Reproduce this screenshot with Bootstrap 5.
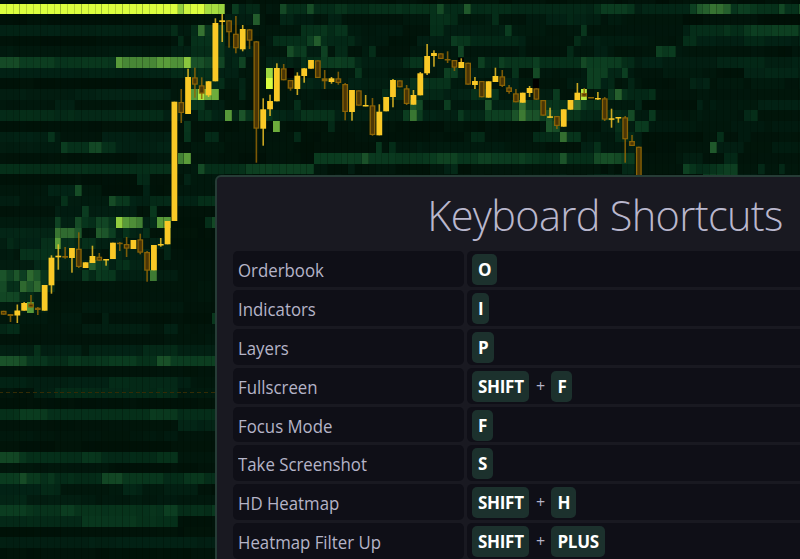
<!DOCTYPE html>
<html lang="en" data-bs-theme="dark">
<head>
<meta charset="utf-8">
<meta name="viewport" content="width=device-width, initial-scale=1">
<title>Keyboard Shortcuts</title>
<link href="https://cdn.jsdelivr.net/npm/bootstrap@5.3.0/dist/css/bootstrap.min.css" rel="stylesheet">
<style>
body{background:#001108;font-family:"Open Sans","Noto Sans",sans-serif;color:#b5b4c8}
.stage{width:800px;height:559px}
.shortcuts{width:780px;height:600px;margin:175px 0 0 215px;background:#191921;border:2px solid #263c36;border-radius:6px;padding:0 16px}
.shortcuts h1{font-weight:300;font-size:43px;line-height:50px;letter-spacing:-.7px;margin:13px 0 11px;color:#b9b7cd;transform:scaleX(.965)}
.keys{row-gap:3px}
.entry{display:grid;grid-template-columns:231px 1fr;grid-template-rows:35.9px;column-gap:3px;height:35.9px}
.entry>div{background:#0f0f17;border-radius:5px;padding:1px 5px 0;font-size:17.5px;line-height:37px;white-space:nowrap;overflow:hidden}
.lbl{display:inline-block;transform:scaleX(.96);transform-origin:left}
.entry kbd{background:#1c312d;color:#fff;font:700 17px/31px "Open Sans","Noto Sans",sans-serif;letter-spacing:-.3px;height:31px;padding:0 5.8px 0 6px;border-radius:5px}
.plus{width:22px;font-size:16px;text-align:center}
</style>
</head>
<body class="m-0 overflow-hidden">
<main class="stage position-relative overflow-hidden d-flex">
  <canvas id="chart" class="position-absolute top-0 start-0" width="800" height="559"></canvas>
  <section class="shortcuts position-relative flex-shrink-0">
    <h1 class="text-center">Keyboard Shortcuts</h1>
    <div class="keys d-flex flex-column">
      <div class="entry"><div><span class="lbl">Orderbook</span></div><div class="d-flex align-items-center"><kbd>O</kbd></div></div>
      <div class="entry"><div><span class="lbl">Indicators</span></div><div class="d-flex align-items-center"><kbd>I</kbd></div></div>
      <div class="entry"><div><span class="lbl">Layers</span></div><div class="d-flex align-items-center"><kbd>P</kbd></div></div>
      <div class="entry"><div><span class="lbl">Fullscreen</span></div><div class="d-flex align-items-center"><kbd>SHIFT</kbd><span class="plus">+</span><kbd>F</kbd></div></div>
      <div class="entry"><div><span class="lbl">Focus Mode</span></div><div class="d-flex align-items-center"><kbd>F</kbd></div></div>
      <div class="entry"><div><span class="lbl">Take Screenshot</span></div><div class="d-flex align-items-center"><kbd>S</kbd></div></div>
      <div class="entry"><div><span class="lbl">HD Heatmap</span></div><div class="d-flex align-items-center"><kbd>SHIFT</kbd><span class="plus">+</span><kbd>H</kbd></div></div>
      <div class="entry"><div><span class="lbl">Heatmap Filter Up</span></div><div class="d-flex align-items-center"><kbd>SHIFT</kbd><span class="plus">+</span><kbd>PLUS</kbd></div></div>
    </div>
  </section>
</main>
<script src="https://cdn.jsdelivr.net/npm/bootstrap@5.3.0/dist/js/bootstrap.bundle.min.js"></script>
<script>
const ctx = document.getElementById('chart').getContext('2d');
const CW = 6.83, RH = 10.67, TOP = 3.7;
const palette = [[0,15,6],[1,23,12],[2,33,20],[5,46,25],[11,60,32],[28,84,42],[56,116,50],[88,154,58],[157,216,64],[220,255,63]];

// Each row lists "column:level" breakpoints; a level holds until the next breakpoint.
const rows = [
"0:.3",
"0:9 26:7.8 27:8.7 28:9 30:8.1 32:7.9 33:1 34:4 35:2.5 36:3 38:1 41:4.5 42:3 45:4.7 46:3 58:3.4 64:4.7 65:3 68:5.2 69:3 75:2.6 88:3.6 93:2 101:4 102:5 103:5.3 104:5.9 106:5.4 107:3 108:4 110:3.4 114:4.6 115:3.6 117:5",
"0:.3 33:1.5 37:5.2 38:.6 41:2.6 43:1 48:2 50:1 63:3 67:1.5 72:3.3 73:1 80:2 88:1 100:.3",
"0:2 25:3 26:1.5 28:3 29:6 30:3.6 33:.8 44:3 51:1 63:3.4 65:1.5 74:3.6 75:1 85:3.5 86:1 100:2 101:3 109:3.8 117:3",
"0:.3 25:.8 26:2.7 27:1 28:3 31:3.5 33:1 40:2.6 45:4 46:5.2 47:2.8 52:1.4 57:.6 61:2 66:4 67:3 69:2 77:1 84:3 85:1.5 88:1 100:3 102:2",
"0:1.2 25:2 28:3 31:3.5 33:2 37:1 42:4.8 43:3.9 45:2 47:4.3 48:1.4 49:3 51:1 54:3 55:1 67:4.2 68:1 83:3 84:1.5 89:.8 96:4 97:3.5 99:.8 112:.5",
"0:4.6 3:4 8:3.5 10:3.6 17:7 18:6.5 23:7 25:6.7 27:7.7 28:4.8 30:4.3 33:2 35:4.3 36:1 39:2 44:3 47:4 52:2 59:3 62:1 70:4 71:2 73:4 74:3 78:4 79:2.8 85:4.5 86:4 91:2.7 93:2",
"0:2 25:2.5 28:3.2 31:2 35:1 39:8 40:1 52:3.2 53:1 65:4 67:1.5 75:3.6 76:.8 78:4.5 79:1 86:4 89:2 91:3.6 92:1 105:.5 109:2",
"0:.4 25:1 28:3 31:3 33:1 35:2 36:1 39:9 40:1 43:2 50:1.5 60:3 66:1 74:2.5 76:1 86:4 88:2.5 90:.8 92:2 93:.7 101:2 104:1",
"0:1.6 11:2 25:1 28:7 29:8.3 30:7.3 32:1 35:2.6 36:1 56:2.6 62:2 69:3 72:3.6 73:1.5 79:2 81:4 82:1 85:8.5 86:1 89:3.5 90:5.3 91:3.4 92:2.6 96:1",
"0:1 8:2 11:1 25:1.5 28:3.6 30:1.6 33:.6 43:3 44:1 60:5.2 61:4.6 62:1 65:4 66:1 71:5 72:2 75:3.7 76:5.8 77:4 79:3.5 82:3 83:4 84:5.8 85:4 86:3 88:1 93:2 94:.5 102:2 103:1 111:2",
"0:2.7 24:1.8 27:1 29:3 31:2 33:7 34:2.4 35:4.9 36:3 40:2 44:3 49:1.5 59:4 60:6 61:4 62:2 67:3.7 68:2 71:4 75:4.8 76:6 77:4.8 79:4 80:4.8 81:4 83:3.5 85:2.6 91:2 92:4.5 93:1 95:3.4 96:1 109:2.6 111:1",
"0:.4 27:3.6 28:.6 40:7.4 41:.7 48:2.5 49:.6 80:4.9 81:4.6 82:1 88:2 90:3.5 91:2 93:3.5 95:1",
"0:2 7:3.5 8:1.6 9:.6 15:1.8 25:.5 27:3.5 28:.7 30:2.6 32:.6 43:3 44:.7 69:2.6 71:1 78:3 82:5.8 83:3.4 85:1 90:2 94:.6 105:2.8 106:1",
"0:1.4 9:4 10:3.2 13:4.5 15:3 17:2 25:.5 28:1 33:.5 55:3.5 56:.7 57:2.7 58:1 80:.6 85:2 87:3.2 88:1.5 92:2 94:.5 104:5.2 105:2 109:1",
"0:.5 20:1 26:6.3 27:7 28:1 32:.6 46:4 53:4.9 54:3.9 78:3.2 82:5.1 83:3.4 87:4.6 91:4 93:1 100:2 103:1 106:2.8 108:.5",
"0:3 25:1.2 29:4.6 30:3 36:4 46:.7 51:2 52:.7 65:2.4 67:.6 91:2.8 93:1 100:3.8 101:3 104:3.4 106:4 108:.8 111:2.6 112:1 114:2.6 115:1",
"0:.4 20:2.6 22:.6 27:2 28:1 33:.5 76:1 87:2 93:.5 103:4 108:1",
"0:1 7:2 11:4.6 12:1 15:.4 21:2 22:.5 25:.3 26:1",
"0:1.6 3:1 9:3 10:1.3 16:4.6 17:3.5 19:2 22:2.7 25:.3 26:2 29:3",
"0:.5 8:1.6 12:4 13:1.8 20:.5 22:3.8 23:.6 25:.4",
"0:1.3 8:4.2 9:2 11:4.6 12:3.5 13:3 14:4.4 16:3.5 17:7.8 18:7 19:6.7 20:6.3 21:2 22:3 23:7 25:.4 30:3 31:4.5",
"0:2.3 8:6 9:5.7 11:5.1 12:1 14:5.2 15:5 16:4.1 17:2 18:3 19:2 21:3 22:.6 24:3 25:.4",
"0:1.5 1:2.6 2:2 6:3 8:7 9:3 11:2.3 12:3 14:2 18:1 22:2 25:.5",
"0:1.2 3:3 8:2.5 12:1 15:.5 16:2.6 18:2 22:.5 24:2 25:.4",
"0:1.5 5:2.5 9:2 13:5.3 14:4 16:2 17:3 19:2 22:3 23:.7",
"0:5 1:4.2 2:5 3:4 4:5.6 5:5 6:3.2 8:1.5 12:3.8 13:2.6 14:3.7 17:2 22:6.2 23:1.4 26:.6",
"0:4.6 1:3 3:5.6 4:5 5:5.6 6:3.2 7:2.4 8:.8",
"0:4.4 3:3 5:2 7:.8",
"0:1.5 3:2 4:7 5:2 7:.8 12:1.3 27:.7",
"0:.7 3:1 12:.5 15:1.7 16:.5 31:3.6",
"0:2.4 1:2.9 3:1 12:1.6 22:1 24:2 26:.8",
"0:.6 24:.9",
"0:1.8 5:3.2 6:1.8 12:1 13:2 21:2.5 26:1.7",
"0:4.9 3:4.5 4:3.6 7:2.7 10:3.4 16:3.9 20:3.2 23:4.8 25:4 31:4.2",
"0:.6",
"0:2.2 4:1.8 16:2.6 26:1.8 28:1",
"0:.7 5:1.8 8:2.6 26:1.2",
"0:.4","0:3 3:3.7 7:3 22:3.8 26:2.8","0:.6 26:2.1","0:1.1 8:.8 19:1.1 26:.6","0:.4",
"0:4.4 3:3.6 4:3 12:3.4 15:2.7 23:3.2 26:1","0:.9 16:.4",
"0:3.9 3:4.6 4:3.9 6:3.1 7:3.6 8:2.8 15:4.4 18:3.4 24:2.8 27:3.5 30:2.8",
"0:2 6:2.5 9:1.1 18:2.2 21:1.4 24:1.8 29:.4","0:2.2 4:1.6 14:1.2",
"0:4 4:3.3 9:4 11:3.3 24:4.1 26:3 31:3.8","0:2.6 12:3.5 20:3.1 26:.5","0:.4","0:1.8","0:.4"
];
let seed = 7;
const rand = () => (seed = (seed * 16807) % 2147483647) / 2147483647;
function shade(level){
  level = Math.max(0, Math.min(9, level));
  const i = Math.min(8, Math.floor(level)), t = level - i;
  return 'rgb(' + palette[i].map((c, n) => Math.round(c + (palette[i+1][n] - c) * t)).join() + ')';
}
rows.forEach((row, n) => {
  const marks = row.split(' ').map(s => s.split(':').map(Number));
  const y0 = Math.round(TOP + (n - 1) * RH), y1 = Math.round(TOP + n * RH);
  let m = 0, drift = 0;
  for (let k = 0; k < 118; k++) {
    while (m + 1 < marks.length && marks[m+1][0] <= k) m++;
    const level = marks[m][1];
    if (rand() < .4) drift = (rand() - .45) * (k > 31 ? .9 : .4);
    const x0 = Math.round(k * CW), x1 = Math.round((k + 1) * CW);
    ctx.fillStyle = shade(level + (level < 4 ? drift : drift * .3));
    ctx.fillRect(x0, y0, x1 - x0, y1 - y0);
  }
});
for (let k = 1; k < 118; k++) {
  ctx.fillStyle = k % 3 ? 'rgba(0,12,0,.17)' : 'rgba(0,12,0,.28)';
  ctx.fillRect(Math.round(k * CW) - 1, 0, 1, 559);
}
ctx.fillStyle = '#000';
ctx.fillRect(287, 68, 7, 10);
ctx.fillRect(533, 79, 6, 10);
ctx.fillRect(458, 58, 6, 9);

// Last-price guide
ctx.fillStyle = '#332b05';
for (let x = -1; x < 215; x += CW) ctx.fillRect(Math.round(x), 392, 4, 1);

// Candles, in column order: direction, body top, body bottom, high, low
const candles = `d 310.8 314.7|d 314 316 314 322|u 310.5 315.5 304.5 323|u 303 310.7 302|d 303.5 307.5 295|d 307.7 310 307 315|u 285 310.7|u 257.7 285.3 255.3 293.7|u 255.7 257.3 244.3 269.7|d 256 257.7 247 258.7|u 248 258 248 272.7|d 248.7 267 232.3 268|u 262.3 268|u 256 263 245.7|d 256.7 260.7 253 261|u 259 260.3 259 265.7|u 242.7 259|d 242.7 244 242 251|d 244 248.7 237 257|u 240 249|d 239.3 252.7 233.7 254.3|d 252 270.7 251 281.7|u 245 270.3|u 244 245.3 238 246.7|u 221 244.3|u 101.7 221|d 102 113 89 123|u 77 114 68.7|d 77.3 84.7 67.7 97.7|d 85.3 93.7 77.3 99|u 81.3 95.3 81 97|u 23 81.3 18.3|u 20.3 22 14 42|d 20.3 32.3 20 47.7|d 33.7 48.3 16 53.3|u 29 49.3 25 51.3|d 29.3 40.7 29 49|d 41.3 128.7 41 162.7|u 109.3 128.7 98.3 145.7|u 101 109.3 94.7 116|u 68 101.3 63.3|d 68.3 80.3 64|d 80 88.7 80 90.7|u 75.7 89 72.3 95|u 68.3 76 68 82.7|u 60 68.7|d 60.3 78|d 78.3 81.3 70 89|u 78.3 82 77 83.7|d 78.3 83 71.7 84.7|d 84 112 83 120.3|u 90 112 90 120.7|d 90.3 105.7|u 105 106.3 95|d 105.3 135 98 135.7|u 111.7 135.3 104.3|u 97 111.3|u 80 97 79 107.3|d 80.3 87.3|d 88.3 104 85 105|u 95 104.7 90|u 73.3 95.3 72|u 56 73.3 44 75|u 53 56 50.3 66.7|d 53.3 59|d 59 60 51.3 63|d 60 67.7 60 71|u 62 68 58.3|d 62.7 84.7|u 81 85 77 89|d 81 97.3|u 81.3 97.7|u 76 82 67.7|d 76.3 86 70 87|d 87.3 92 85 93.7|d 93.3 102.3 89|u 92.7 102.7|u 88 93 86 97|d 88.3 99.7|d 100 115.7|u 116.3 117.7 107.7|d 116 126 116 129|u 109.3 126.7|u 100 109.7|u 92.7 100 83|d 93 96.7 88|d 97 98|u 98 99 92 100|d 98.3 119.7 97 121|u 118.3 119.7 108.7 127.7|u 117 118 117 122.7|d 117.3 139.3 116 162.7|d 141 146 135|d 146.7 190`;
candles.split('|').forEach((item, k) => {
  const [dir, top, bottom, high = top, low = bottom] = item.split(' ').map((v, i) => i ? +v : v);
  const cx = (k + .5) * CW + .25, h = Math.max(1.5, bottom - top);
  const up = dir === 'u';
  ctx.fillStyle = up ? 'rgba(250,201,38,.8)' : 'rgba(145,101,5,.85)';
  ctx.fillRect(cx - .8, high, 1.6, low - high);
  ctx.fillStyle = up ? '#fac926' : '#8b6306';
  ctx.fillRect(cx - 2.9, top, 5.8, h);
  if (!up && h > 3.5) { ctx.fillStyle = '#4b3606'; ctx.fillRect(cx - 1.6, top + 1.2, 3.2, h - 2.4); }
});
</script>
</body>
</html>
